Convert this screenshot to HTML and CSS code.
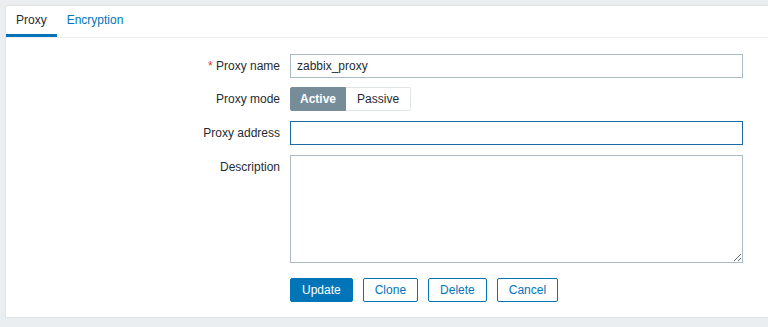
FILE: index.html
```html
<!DOCTYPE html>
<html lang="en">
<head>
    <meta charset="UTF-8">
    <meta name="viewport" content="width=device-width, initial-scale=1.0">
    <title>Proxy</title>
    <link rel="stylesheet" href="styles.css">
</head>
<body>
    <div class="panel">
        <ul class="tabs">
            <li class="tab active">Proxy</li>
            <li class="tab">Encryption</li>
        </ul>

        <form class="form">
            <div class="form-row">
                <label class="form-label"><span class="required">*</span> Proxy name</label>
                <div class="form-field">
                    <input type="text" class="text-input" value="zabbix_proxy">
                </div>
            </div>

            <div class="form-row">
                <label class="form-label">Proxy mode</label>
                <div class="form-field">
                    <div class="segmented">
                        <span class="segment selected">Active</span>
                        <span class="segment">Passive</span>
                    </div>
                </div>
            </div>

            <div class="form-row">
                <label class="form-label">Proxy address</label>
                <div class="form-field">
                    <input type="text" class="text-input focused" value="">
                </div>
            </div>

            <div class="form-row">
                <label class="form-label">Description</label>
                <div class="form-field">
                    <textarea class="text-area"></textarea>
                </div>
            </div>

            <div class="form-row buttons">
                <div class="form-label"></div>
                <div class="form-field button-list">
                    <button type="button" class="btn btn-main">Update</button>
                    <button type="button" class="btn btn-alt">Clone</button>
                    <button type="button" class="btn btn-alt">Delete</button>
                    <button type="button" class="btn btn-alt">Cancel</button>
                </div>
            </div>
        </form>
    </div>
</body>
</html>
```

FILE: styles.css
```css
body {
    font-family: "Liberation Sans", Arial, sans-serif;
    font-size: 12px;
    color: #1f2c33;
    margin: 0;
    padding: 5px 0 0 5px;
    background: #ebeef0;
    overflow: hidden;
}

.panel {
    background: #ffffff;
    border: 1px solid #dfe4e7;
    border-right: none;
    width: 780px;
}

.tabs {
    list-style: none;
    margin: 0;
    padding: 0;
    display: flex;
    border-bottom: 1px solid #ebeef0;
}

.tab {
    padding: 0 10px;
    height: 28px;
    line-height: 28px;
    border-bottom: 3px solid transparent;
    color: #0275b8;
}

.tab.active {
    color: #1f2c33;
    border-bottom-color: #0275b8;
}

.form {
    margin: 0;
    padding: 16px 0 15px 0;
}

.form-row {
    display: flex;
    gap: 10px;
    margin-bottom: 10px;
}

.form-row:first-child {
    margin-bottom: 9px;
}

.form-row.buttons {
    margin-top: 15px;
    margin-bottom: 0;
}

.form-label {
    width: 274px;
    flex-shrink: 0;
    text-align: right;
    line-height: 24px;
}

.required {
    color: #e33734;
}

.text-input {
    box-sizing: border-box;
    width: 453px;
    height: 24px;
    margin: 0;
    padding: 0 6px;
    border: 1px solid #acbbc2;
    border-radius: 0;
    font-family: inherit;
    font-size: 12px;
    color: #1f2c33;
    background: #ffffff;
    outline: none;
}

.text-input.focused {
    border-color: #1b6aa5;
}

.text-area {
    display: block;
    box-sizing: border-box;
    width: 453px;
    height: 108px;
    margin: 0;
    padding: 4px 6px;
    border: 1px solid #acbbc2;
    border-radius: 0;
    font-family: inherit;
    font-size: 12px;
    color: #1f2c33;
    resize: both;
}

.segmented {
    display: inline-flex;
    height: 24px;
}

.segment {
    box-sizing: border-box;
    height: 24px;
    line-height: 22px;
    padding: 0 11px;
    border: 1px solid #dfe4e7;
    background: #ffffff;
    color: #1f2c33;
}

.segment:first-child {
    border-radius: 2px 0 0 2px;
}

.segment:last-child {
    border-left: none;
    border-radius: 0 2px 2px 0;
}

.segment.selected {
    padding: 0 9px;
    background: #768d99;
    border-color: #768d99;
    color: #ffffff;
    font-weight: bold;
}

.button-list {
    display: flex;
    gap: 10px;
}

.btn {
    box-sizing: border-box;
    height: 24px;
    padding: 0 11px;
    margin: 0;
    border: 1px solid #0275b8;
    border-radius: 2px;
    font-family: inherit;
    font-size: 12px;
    cursor: pointer;
}

.btn-main {
    background: #0275b8;
    color: #ffffff;
}

.btn-alt {
    background: #ffffff;
    color: #0275b8;
}
```
